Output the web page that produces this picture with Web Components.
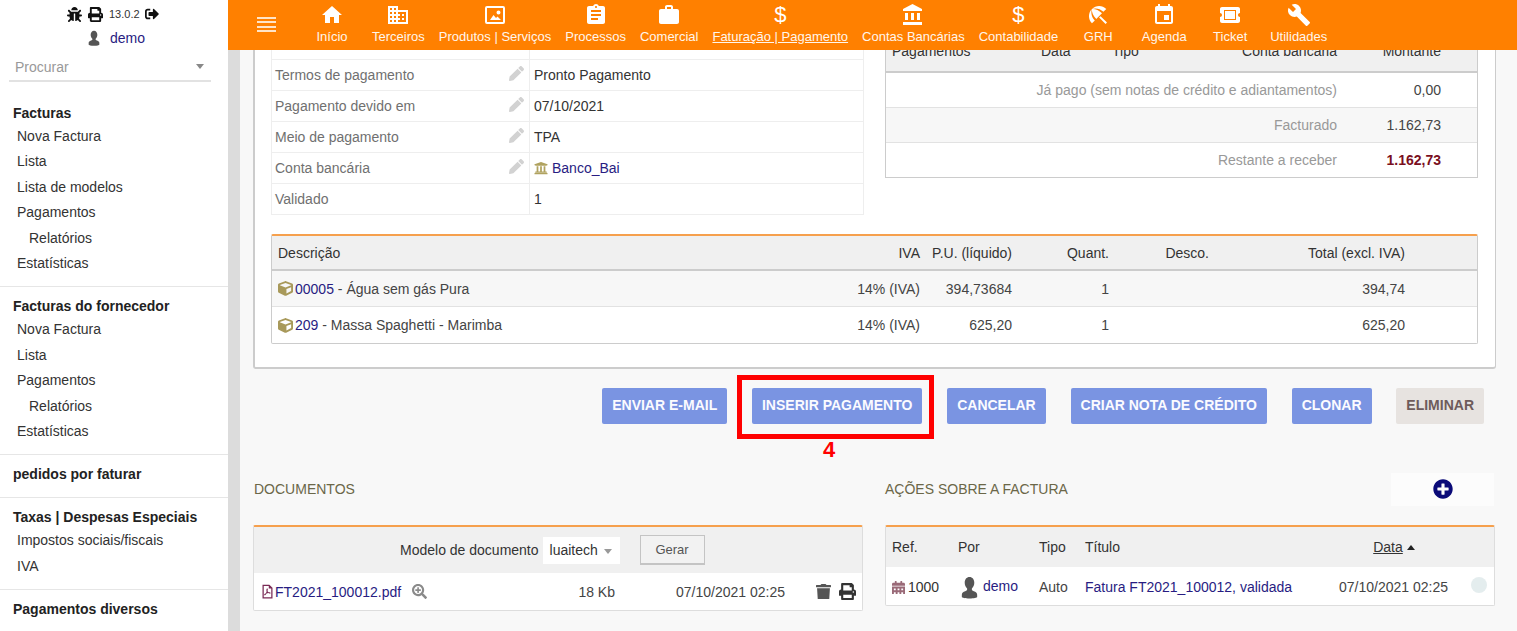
<!DOCTYPE html>
<html lang="pt">
<head>
<meta charset="utf-8">
<title>Factura</title>
<style>
  html, body {margin: 0;height: 100%;overflow: hidden;}
  body {display: flex;width: 1517px;height: 631px;background: #f8f8f8;color: #333;font: 14px/20px "Liberation Sans", Arial, sans-serif;}
</style>
</head>
<body>
<app-sidebar>
  <side-block heading="Facturas">
    <side-item>Nova Factura</side-item>
    <side-item>Lista</side-item>
    <side-item>Lista de modelos</side-item>
    <side-item>Pagamentos</side-item>
    <side-item sub>Relatórios</side-item>
    <side-item>Estatísticas</side-item>
  </side-block>
  <side-block heading="Facturas do fornecedor">
    <side-item>Nova Factura</side-item>
    <side-item>Lista</side-item>
    <side-item>Pagamentos</side-item>
    <side-item sub>Relatórios</side-item>
    <side-item>Estatísticas</side-item>
  </side-block>
  <side-block heading="pedidos por faturar" empty></side-block>
  <side-block heading="Taxas | Despesas Especiais">
    <side-item>Impostos sociais/fiscais</side-item>
    <side-item>IVA</side-item>
  </side-block>
  <side-block heading="Pagamentos diversos" empty></side-block>
</app-sidebar>

<app-main>
  <top-bar slot="bar">
    <nav-item icon="home" label="Início"></nav-item>
    <nav-item icon="company" label="Terceiros"></nav-item>
    <nav-item icon="picture" label="Produtos | Serviços"></nav-item>
    <nav-item icon="clipboard" label="Processos"></nav-item>
    <nav-item icon="briefcase" label="Comercial"></nav-item>
    <nav-item glyph="$" label="Faturação | Pagamento" active></nav-item>
    <nav-item icon="bank" label="Contas Bancárias"></nav-item>
    <nav-item glyph="$" label="Contabilidade"></nav-item>
    <nav-item icon="umbrella" label="GRH"></nav-item>
    <nav-item icon="event" label="Agenda"></nav-item>
    <nav-item icon="ticket" label="Ticket"></nav-item>
    <nav-item icon="wrench" label="Utilidades"></nav-item>
  </top-bar>

  <invoice-card>
    <field-table slot="left">
      <field-row></field-row>
      <field-row label="Termos de pagamento" editable>Pronto Pagamento</field-row>
      <field-row label="Pagamento devido em" editable>07/10/2021</field-row>
      <field-row label="Meio de pagamento" editable>TPA</field-row>
      <field-row label="Conta bancária" editable bank><span style="color:#281c82">Banco_Bai</span></field-row>
      <field-row label="Validado">1</field-row>
    </field-table>
    <pay-table slot="right">
      <pay-row label="Já pago (sem notas de crédito e adiantamentos)" amount="0,00"></pay-row>
      <pay-row label="Facturado" amount="1.162,73" shaded></pay-row>
      <pay-row label="Restante a receber" amount="1.162,73" due></pay-row>
    </pay-table>
    <line-table slot="lines">
      <line-row ref="00005" name=" - Água sem gás Pura" pu="394,73684" total="394,74" shaded></line-row>
      <line-row ref="209" name=" - Massa Spaghetti - Marimba" pu="625,20" total="625,20"></line-row>
    </line-table>
  </invoice-card>

  <action-bar>
    <act-button>Enviar e-mail</act-button>
    <call-out number="4"><act-button>Inserir pagamento</act-button></call-out>
    <act-button>Cancelar</act-button>
    <act-button>Criar nota de crédito</act-button>
    <act-button>Clonar</act-button>
    <act-button danger>Eliminar</act-button>
  </action-bar>

  <lower-panels>
    <doc-panel slot="docs"></doc-panel>
    <event-panel slot="events"></event-panel>
  </lower-panels>
</app-main>

<script>
// icons, [viewBox size, path]
const ICONS = {
  home: [24, 'M10 20v-6h4v6h5v-8h3L12 3 2 12h3v8z'],
  company: [24, 'M12 7V3H2v18h20V7H12zM6 19H4v-2h2v2zm0-4H4v-2h2v2zm0-4H4V9h2v2zm0-4H4V5h2v2zm4 12H8v-2h2v2zm0-4H8v-2h2v2zm0-4H8V9h2v2zm0-4H8V5h2v2zm10 12h-8v-2h2v-2h-2v-2h2v-2h-2V9h8v10zm-2-8h-2v2h2v-2zm0 4h-2v2h2v-2z'],
  picture: [24, 'M4 3h16a2 2 0 0 1 2 2v14a2 2 0 0 1-2 2H4a2 2 0 0 1-2-2V5a2 2 0 0 1 2-2zm0 2v14h16V5H4zm11.5 2.5a2 2 0 1 1 0 4 2 2 0 0 1 0-4zM7 17l3.5-5 2.5 3 1.5-1.500L18 17H7z'],
  clipboard: [24, 'M19 3h-4.18C14.4 1.84 13.3 1 12 1c-1.3 0-2.4.84-2.82 2H5c-1.1 0-2 .9-2 2v14c0 1.1.9 2 2 2h14c1.1 0 2-.9 2-2V5c0-1.1-.9-2-2-2zm-7 0c.55 0 1 .45 1 1s-.45 1-1 1-1-.45-1-1 .45-1 1-1zm2 14H7v-2h7v2zm3-4H7v-2h10v2zm0-4H7V7h10v2z'],
  briefcase: [24, 'M20 6h-4V4c0-1.11-.89-2-2-2h-4c-1.11 0-2 .89-2 2v2H4c-1.11 0-1.99.89-1.99 2L2 19c0 1.11.89 2 2 2h16c1.11 0 2-.89 2-2V8c0-1.11-.89-2-2-2zm-6 0h-4V4h4v2z'],
  bank: [24, 'M4 10v7h3v-7H4zm6 0v7h3v-7h-3zM2 22h19v-3H2v3zm14-12v7h3v-7h-3zm-4.500-9L2 6v2h19V6l-9.500-5z'],
  umbrella: [24, 'M13.127 14.56l1.43-1.43 6.44 6.443L19.57 21zm4.293-5.73l2.86-2.86c-3.95-3.95-10.35-3.96-14.3-.02 3.93-1.3 8.31-.25 11.44 2.88zM5.95 5.98c-3.94 3.95-3.93 10.35.02 14.3l2.86-2.86C5.7 14.29 4.65 9.91 5.95 5.98zm.02-.02l-.01.01c-.38 3.01 1.17 6.88 4.3 10.02l5.73-5.73c-3.13-3.13-7.01-4.68-10.02-4.3z'],
  event: [24, 'M17 12h-5v5h5v-5zM16 1v2H8V1H6v2H5c-1.11 0-1.99.9-1.99 2L3 19c0 1.100.89 2 2 2h14c1.100 0 2-.9 2-2V5c0-1.100-.9-2-2-2h-1V1h-2zm3 18H5V8h14v11z'],
  ticket: [24, 'M22 10V6c0-1.11-.9-2-2-2H4c-1.100 0-1.99.89-1.99 2v4c1.100 0 1.99.9 1.99 2s-.89 2-2 2v4c0 1.100.9 2 2 2h16c1.100 0 2-.9 2-2v-4c-1.100 0-2-.9-2-2s.9-2 2-2zM18 7v10H6V7h12zM17 8H7v8h10V8z'],
  wrench: [24, 'M22.7 19l-9.100-9.100c.9-2.300.4-5-1.500-6.900-2-2-5-2.400-7.400-1.300L9 6 6 9 1.600 4.700C.4 7.100.9 10.100 2.900 12.100c1.900 1.900 4.600 2.400 6.900 1.500l9.100 9.100c.4.4 1 .4 1.400 0l2.300-2.300c.5-.4.5-1.100.1-1.400z'],
  bug: [512, 'M511.988 288.9c-.478 17.43-15.217 31.1-32.653 31.1H424v16c0 21.864-4.882 42.584-13.6 61.145l60.228 60.228c12.496 12.497 12.496 32.758 0 45.255-12.498 12.497-32.759 12.496-45.256 0l-54.736-54.736C345.886 467.965 314.351 480 280 480V236c0-6.627-5.373-12-12-12h-24c-6.627 0-12 5.373-12 12v244c-34.351 0-65.886-12.035-90.636-32.108l-54.736 54.736c-12.498 12.497-32.759 12.496-45.256 0-12.496-12.497-12.496-32.758 0-45.255l60.228-60.228C92.882 378.584 88 357.864 88 336v-16H32.666C15.23 320 .491 306.33.013 288.9-.484 270.816 14.028 256 32 256h56v-58.745l-46.628-46.628c-12.496-12.497-12.496-32.758 0-45.255 12.498-12.497 32.758-12.497 45.256 0L141.255 160h229.489l54.627-54.627c12.498-12.497 32.758-12.497 45.256 0 12.496 12.497 12.496 32.758 0 45.255L424 197.255V256h56c17.972 0 32.484 14.816 31.988 32.900zM257 0c-61.856 0-112 50.144-112 112h224C369 50.144 318.856 0 257 0z'],
  print: [512, 'M448 192V77.25c0-8.49-3.37-16.62-9.37-22.63L393.37 9.37c-6-6-14.14-9.37-22.63-9.37H96C78.33 0 64 14.33 64 32v160c-35.35 0-64 28.65-64 64v112c0 8.84 7.16 16 16 16h48v96c0 17.67 14.33 32 32 32h320c17.67 0 32-14.33 32-32v-96h48c8.84 0 16-7.16 16-16V256c0-35.35-28.65-64-64-64zm-64 256H128v-96h256v96zm0-224H128V64h192v48c0 8.84 7.16 16 16 16h48v96zm48 72c-13.25 0-24-10.75-24-24 0-13.26 10.75-24 24-24s24 10.74 24 24c0 13.25-10.75 24-24 24z'],
  logout: [512, 'M497 273L329 441c-15 15-41 4.500-41-17v-96H152c-13.300 0-24-10.700-24-24v-96c0-13.300 10.700-24 24-24h136V88c0-21.400 25.900-32 41-17l168 168c9.300 9.400 9.300 24.600 0 34zM192 436v-40c0-6.600-5.400-12-12-12H96c-17.700 0-32-14.300-32-32V160c0-17.700 14.300-32 32-32h84c6.600 0 12-5.400 12-12V76c0-6.600-5.400-12-12-12H96c-53 0-96 43-96 96v192c0 53 43 96 96 96h84c6.600 0 12-5.400 12-12z'],
  user: [24, 'M12 1c3 0 5 2.500 5 6 0 2.500-1 4.500-2.500 6-.4 1.500.4 2.300 2 2.800 2 .7 3.500 1.600 3.500 3.700V22c0 .6-3.500 1.500-8 1.500S4 22.600 4 22v-2.500c0-2.100 1.500-3 3.500-3.700 1.600-.5 2.400-1.300 2-2.800C8 11.500 7 9.500 7 7c0-3.500 2-6 5-6z'],
  pencil: [512, 'M497.9 142.1l-46.1 46.1c-4.7 4.7-12.3 4.7-17 0l-111-111c-4.7-4.7-4.7-12.3 0-17l46.1-46.1c18.7-18.7 49.1-18.7 67.9 0l60.1 60.1c18.8 18.7 18.8 49.1 0 67.900zM284.2 99.800L21.600 362.400.4 483.900c-2.900 16.400 11.400 30.600 27.800 27.800l121.500-21.300 262.600-262.600c4.700-4.700 4.700-12.300 0-17l-111-111c-4.800-4.700-12.400-4.700-17.100 0z'],
  university: [512, 'M496 128v16a8 8 0 0 1-8 8h-24v12c0 6.627-5.373 12-12 12H60c-6.627 0-12-5.373-12-12v-12H24a8 8 0 0 1-8-8v-16a8 8 0 0 1 4.941-7.392l232-88a7.996 7.996 0 0 1 6.118 0l232 88A8 8 0 0 1 496 128zm-24 304H40c-13.255 0-24 10.745-24 24v16a8 8 0 0 0 8 8h464a8 8 0 0 0 8-8v-16c0-13.255-10.745-24-24-24zM96 192v192H60c-6.627 0-12 5.373-12 12v20h416v-20c0-6.627-5.373-12-12-12h-36V192h-64v192h-64V192h-64v192h-64V192H96z'],
  cube: [512, 'M239.1 6.300l-208 78c-18.700 7-31.100 25-31.100 45v225.100c0 18.200 10.300 34.800 26.500 42.900l208 104c13.500 6.800 29.400 6.800 42.900 0l208-104c16.300-8.100 26.500-24.800 26.500-42.900V129.300c0-20-12.400-37.900-31.100-44.900l-208-78C262 2.200 250 2.200 239.100 6.300zM256 68.400l192 72v1.100l-192 78-192-78v-1.100l192-72zm32 356V275.500l160-65v133.900l-160 80z'],
  trash: [448, 'M432 32H312l-9.400-18.700A24 24 0 0 0 281.100 0H166.800a23.720 23.720 0 0 0-21.400 13.300L136 32H16A16 16 0 0 0 0 48v32a16 16 0 0 0 16 16h416a16 16 0 0 0 16-16V48a16 16 0 0 0-16-16zM53.200 467a48 48 0 0 0 47.900 45h245.800a48 48 0 0 0 47.900-45L416 128H32z'],
  zoomin: [512, 'M304 192v32c0 6.600-5.400 12-12 12h-56v56c0 6.600-5.400 12-12 12h-32c-6.600 0-12-5.400-12-12v-56h-56c-6.600 0-12-5.400-12-12v-32c0-6.600 5.400-12 12-12h56v-56c0-6.600 5.400-12 12-12h32c6.600 0 12 5.400 12 12v56h56c6.600 0 12 5.400 12 12zm201 284.700L476.700 505c-9.400 9.400-24.600 9.400-33.900 0L343 405.300c-4.500-4.500-7-10.600-7-17V372c-35.300 27.600-79.700 44-128 44C93.100 416 0 322.900 0 208S93.100 0 208 0s208 93.100 208 208c0 48.300-16.400 92.700-44 128h16.300c6.400 0 12.500 2.500 17 7l99.700 99.700c9.300 9.400 9.300 24.600 0 34zM344 208c0-75.200-60.800-136-136-136S72 132.800 72 208s60.800 136 136 136 136-60.800 136-136z'],
  calendar: [448, 'M0 464c0 26.500 21.500 48 48 48h352c26.500 0 48-21.500 48-48V192H0v272zm320-196c0-6.600 5.400-12 12-12h40c6.600 0 12 5.400 12 12v40c0 6.600-5.400 12-12 12h-40c-6.600 0-12-5.400-12-12v-40zm0 128c0-6.600 5.400-12 12-12h40c6.600 0 12 5.400 12 12v40c0 6.600-5.400 12-12 12h-40c-6.600 0-12-5.400-12-12v-40zM192 268c0-6.600 5.400-12 12-12h40c6.600 0 12 5.400 12 12v40c0 6.600-5.400 12-12 12h-40c-6.600 0-12-5.400-12-12v-40zm0 128c0-6.600 5.400-12 12-12h40c6.600 0 12 5.400 12 12v40c0 6.600-5.400 12-12 12h-40c-6.600 0-12-5.400-12-12v-40zM64 268c0-6.600 5.400-12 12-12h40c6.600 0 12 5.400 12 12v40c0 6.600-5.400 12-12 12H76c-6.600 0-12-5.400-12-12v-40zm0 128c0-6.600 5.400-12 12-12h40c6.600 0 12 5.400 12 12v40c0 6.600-5.400 12-12 12H76c-6.600 0-12-5.400-12-12v-40zM400 64h-48V16c0-8.800-7.200-16-16-16h-32c-8.800 0-16 7.200-16 16v48H160V16c0-8.800-7.200-16-16-16h-32c-8.800 0-16 7.200-16 16v48H48C21.500 64 0 85.500 0 112v48h448v-48c0-26.500-21.500-48-48-48z'],
  pluscircle: [512, 'M256 8C119 8 8 119 8 256s111 248 248 248 248-111 248-248S393 8 256 8zm144 276c0 6.600-5.400 12-12 12h-92v92c0 6.600-5.400 12-12 12h-56c-6.600 0-12-5.400-12-12v-92h-92c-6.600 0-12-5.400-12-12v-56c0-6.600 5.400-12 12-12h92v-92c0-6.600 5.400-12 12-12h56c6.600 0 12 5.400 12 12v92h92c6.600 0 12 5.400 12 12v56z'],
  pdf: [24, 'M5 1h10l5 5v17H4V1h1zm1 2v18h12V7h-4V3H6zm5.500 4c1 0 1.200 1 .9 2.500-.1.600-.2 1-.4 1.500.4.800 1 1.600 1.700 2.200 1.300-.2 3.300-.2 3.300 1.100 0 1.200-1.800 1.100-3.600-.1-1 .2-2 .5-3 .9-.8 1.500-1.800 3-2.900 3-.8 0-1.100-.7-.8-1.300.4-.9 1.500-1.600 2.700-2.100.5-1 .9-2 1.200-3-.5-1.300-.6-4.700.9-4.700z']
};

function icon(name, size, color) {
  const [vb, d] = ICONS[name];
  return `<svg width="${size}" height="${size}" viewBox="0 0 ${vb} ${vb}" style="display:block;flex:none" fill="${color || 'currentColor'}" fill-rule="evenodd" aria-hidden="true"><path d="${d}"/></svg>`;
}

class AppSidebar extends HTMLElement {
  constructor() {
    super();
    this.attachShadow({ mode: 'open' }).innerHTML = `
      <style>
      :host {display: block;flex: none;width: 228px;height: 631px;overflow: hidden;background: #fff;}
      .tools {display: flex;align-items: center;height: 28px;padding-left: 67px;box-sizing: border-box;}
      .tools span {font-size: 11px;margin: 0 5px 0 6px;}
      .who {display: flex;align-items: center;height: 20px;padding-left: 86px;color: #281c82;}
      .who span {margin-left: 8px;}
      .search {display: flex;align-items: center;justify-content: space-between;margin: 5px 17px 12px 9px;padding: 0 7px 0 6px;height: 27px;border-bottom: 2px solid #e2e2e2;color: #999;}
      .search i {border: 4.500px solid transparent;border-top: 5px solid #888;border-bottom: 0;}
      </style>
      <div class="tools">${icon('bug', 15, '#111')}<div style="width:6px"></div>${icon('print', 15, '#111')}<span>13.0.2</span>${icon('logout', 14, '#111')}</div>
      <div class="who">${icon('user', 16, '#555')}<span>demo</span></div>
      <div class="search">Procurar<i></i></div>
      <slot></slot>
    `;
  }
}
customElements.define('app-sidebar', AppSidebar);

class SideBlock extends HTMLElement {
  constructor() {
    super();
    this.attachShadow({ mode: 'open' }).innerHTML = `
      <style>
      :host {display: block;padding: 9px 0 10px;border-bottom: 1px solid #e6e6e6;}
      :host([empty]) {padding-bottom: 12px;}
      :host(:last-of-type) {border: 0;}
      h4 {margin: 0;padding-left: 13px;font: bold 14px/21px "Liberation Sans", Arial, sans-serif;color: #222;}
      </style>
      <h4>${this.getAttribute('heading')}</h4>
      <slot></slot>
    `;
  }
}
customElements.define('side-block', SideBlock);

class SideItem extends HTMLElement {
  constructor() {
    super();
    this.attachShadow({ mode: 'open' }).innerHTML = `
      <style>
      :host {display: block;padding-left: 17px;line-height: 25.400px;color: #333;}
      :host([sub]) {padding-left: 29px;}
      </style>
      <slot></slot>
    `;
  }
}
customElements.define('side-item', SideItem);

class AppMain extends HTMLElement {
  constructor() {
    super();
    this.attachShadow({ mode: 'open' }).innerHTML = `
      <style>
      :host {display: flex;flex-direction: column;flex: 1;min-width: 0;height: 631px;}
      .body {flex: 1;display: flex;min-height: 0;}
      .track {flex: none;width: 12px;background: #dcdcdc;}
      .page {flex: 1;min-width: 0;overflow: hidden;padding: 0 21px 0 13px;}
      </style>
      <slot name="bar"></slot>
      <div class="body">
        <div class="track"></div>
        <div class="page"><slot></slot></div>
      </div>
    `;
  }
}
customElements.define('app-main', AppMain);

class TopBar extends HTMLElement {
  constructor() {
    super();
    this.attachShadow({ mode: 'open' }).innerHTML = `
      <style>
      :host {display: flex;flex: none;height: 50px;background: #ff8000;color: #fff;padding-left: 29px;position: relative;z-index: 2;}
      .burger {flex: none;display: flex;flex-direction: column;justify-content: space-between;width: 19px;height: 15px;margin: 17px 23px 0 0;}
      .burger i {display: block;height: 2px;background: #ffe4c8;}
      </style>
      <div class="burger"><i></i><i></i><i></i><i></i></div>
      <slot></slot>
    `;
  }
}
customElements.define('top-bar', TopBar);

class NavItem extends HTMLElement {
  constructor() {
    super();
    const name = this.getAttribute('icon');
    const glyph = this.getAttribute('glyph');
    const ico = name ? icon(name, 24) : `<b>${glyph}</b>`;
    this.attachShadow({ mode: 'open' }).innerHTML = `
      <style>
      :host {display: flex;flex-direction: column;align-items: center;box-sizing: border-box;min-width: 66px;padding: 0 7px;color: #fff;}
      .ico {height: 27px;padding-top: 2px;box-sizing: border-box;display: flex;align-items: center;justify-content: center;}
      b {font: normal 22px/25px "Liberation Sans", Arial, sans-serif;}
      .txt {font-size: 13px;line-height: 16px;margin-top: 2px;white-space: nowrap;color: #fff6ec;}
      :host([active]) .txt {text-decoration: underline;}
      </style>
      <div class="ico">${ico}</div>
      <div class="txt">${this.getAttribute('label')}</div>
    `;
  }
}
customElements.define('nav-item', NavItem);

class InvoiceCard extends HTMLElement {
  constructor() {
    super();
    this.attachShadow({ mode: 'open' }).innerHTML = `
      <style>
      :host {display: block;margin-top: -21px;padding: 0 17px 23px 16px;background: #fff;border: solid #ccc;border-width: 0 1px 2px 2px;border-radius: 0 0 3px 3px;}
      .cols {display: grid;grid-template-columns: 593px 593px;column-gap: 21px;}
      .lines {margin-top: 19px;}
      </style>
      <div class="cols"><slot name="left"></slot><slot name="right"></slot></div>
      <div class="lines"><slot name="lines"></slot></div>
    `;
  }
}
customElements.define('invoice-card', InvoiceCard);

class FieldTable extends HTMLElement {
  constructor() {
    super();
    this.attachShadow({ mode: 'open' }).innerHTML = `
      <style>:host {display: block;border: 1px solid #eee;border-width: 0 1px 0 1px;}</style>
      <slot></slot>
    `;
  }
}
customElements.define('field-table', FieldTable);

class FieldRow extends HTMLElement {
  constructor() {
    super();
    const pen = this.hasAttribute('editable') ? icon('pencil', 15, '#d2d2d2') : '';
    const bank = this.hasAttribute('bank') ? `<span class="bk">${icon('university', 14, '#b0a25f')}</span>` : '';
    this.attachShadow({ mode: 'open' }).innerHTML = `
      <style>
      :host {display: grid;grid-template-columns: 258px 1fr;height: 31px;box-sizing: border-box;border-bottom: 1px solid #eee;background: #fff;}
      .k {display: flex;align-items: center;justify-content: space-between;padding: 0 5px 0 3px;border-right: 1px solid #eee;color: #707070;}
      .k svg {margin-top: -4px;}
      .v {display: flex;align-items: center;padding-left: 4px;color: #333;}
      .bk {margin-right: 4px;}
      </style>
      <div class="k"><span>${this.getAttribute('label') || ''}</span>${pen}</div>
      <div class="v">${bank}<slot></slot></div>
    `;
  }
}
customElements.define('field-row', FieldRow);

const PAY_COLS = '149px 71px 100px 125px 104px 1fr';

class PayTable extends HTMLElement {
  constructor() {
    super();
    this.attachShadow({ mode: 'open' }).innerHTML = `
      <style>
      :host {display: block;margin-top: 6px;align-self: start;background: #fff;border: 1px solid #ccc;border-top: 0;}
      .head {display: grid;grid-template-columns: ${PAY_COLS};align-items: center;height: 38px;box-sizing: border-box;padding: 0 0 4px 6px;background: #f0f0f0;border-bottom: 2px solid #ccc;}
      .r {text-align: right;}
      </style>
      <div class="head"><span>Pagamentos</span><span>Data</span><span>Tipo</span><span class="r">Conta bancária</span><span class="r">Montante</span></div>
      <slot></slot>
    `;
  }
}
customElements.define('pay-table', PayTable);

class PayRow extends HTMLElement {
  constructor() {
    super();
    this.attachShadow({ mode: 'open' }).innerHTML = `
      <style>
      :host {display: grid;grid-template-columns: ${PAY_COLS};align-items: center;height: 35px;box-sizing: border-box;padding-left: 6px;border-bottom: 1px solid #e2e2e2;}
      :host(:last-child) {border-bottom: 0;height: 34px;}
      :host([shaded]) {background: #f7f7f7;}
      .l {grid-column: 1 / 5;text-align: right;color: #999;}
      .a {text-align: right;color: #444;}
      :host([due]) .a {color: #7a0f1e;font-weight: bold;}
      </style>
      <span class="l">${this.getAttribute('label')}</span>
      <span class="a">${this.getAttribute('amount')}</span>
    `;
  }
}
customElements.define('pay-row', PayRow);

const LINE_COLS = '1fr 80px 92px 97px 100px 196px 72px';

class LineTable extends HTMLElement {
  constructor() {
    super();
    this.attachShadow({ mode: 'open' }).innerHTML = `
      <style>
      :host {display: block;background: #fff;border: 1px solid #ccc;border-top: 2px solid #f6a04d;border-radius: 2px;}
      .head {display: grid;grid-template-columns: ${LINE_COLS};align-items: center;height: 35px;box-sizing: border-box;padding-left: 6px;background: #f0f0f0;border-bottom: 2px solid #ccc;}
      .r {text-align: right;}
      </style>
      <div class="head"><span>Descrição</span><span class="r">IVA</span><span class="r">P.U. (líquido)</span><span class="r">Quant.</span><span class="r">Desco.</span><span class="r">Total (excl. IVA)</span></div>
      <slot></slot>
    `;
  }
}
customElements.define('line-table', LineTable);

class LineRow extends HTMLElement {
  constructor() {
    super();
    this.attachShadow({ mode: 'open' }).innerHTML = `
      <style>
      :host {display: grid;grid-template-columns: ${LINE_COLS};align-items: center;height: 36px;box-sizing: border-box;padding-left: 6px;border-bottom: 1px solid #e2e2e2;color: #444;}
      :host(:last-child) {border-bottom: 0;}
      :host([shaded]) {background: #f7f7f7;}
      .d {display: flex;align-items: center;white-space: pre;}
      .d a {color: #281c82;}
      .d svg {margin-right: 2px;}
      .r {text-align: right;}
      </style>
      <span class="d">${icon('cube', 15, '#a8995a')}<a>${this.getAttribute('ref')}</a>${this.getAttribute('name')}</span>
      <span class="r">14% (IVA)</span>
      <span class="r">${this.getAttribute('pu')}</span>
      <span class="r">1</span>
      <span></span>
      <span class="r">${this.getAttribute('total')}</span>
    `;
  }
}
customElements.define('line-row', LineRow);

class ActionBar extends HTMLElement {
  constructor() {
    super();
    this.attachShadow({ mode: 'open' }).innerHTML = `
      <style>:host {display: flex;justify-content: flex-end;gap: 24.800px;margin: 19px 12px 0 0;}</style>
      <slot></slot>
    `;
  }
}
customElements.define('action-bar', ActionBar);

class ActButton extends HTMLElement {
  constructor() {
    super();
    this.attachShadow({ mode: 'open' }).innerHTML = `
      <style>
      :host {display: flex;align-items: center;height: 36px;box-sizing: border-box;padding: 0 10px 2px;border-radius: 2px;background: #7a94e2;color: #fbfbff;font-weight: bold;text-transform: uppercase;white-space: nowrap;}
      :host([danger]) {background: #e7e3e0;color: #6e5b5b;}
      </style>
      <slot></slot>
    `;
  }
}
customElements.define('act-button', ActButton);

// red annotation drawn over the button
class CallOut extends HTMLElement {
  constructor() {
    super();
    this.attachShadow({ mode: 'open' }).innerHTML = `
      <style>
      :host {display: block;position: relative;}
      .box {position: absolute;left: -15px;right: -12px;top: -13px;bottom: -15px;border: 5px solid #f00;}
      .num {position: absolute;left: 50%;top: 50px;width: 20px;margin-left: -18px;text-align: center;font: bold 22px/24px "Liberation Sans", Arial, sans-serif;color: #f00;}
      </style>
      <slot></slot>
      <div class="box"></div>
      <div class="num">${this.getAttribute('number')}</div>
    `;
  }
}
customElements.define('call-out', CallOut);

class LowerPanels extends HTMLElement {
  constructor() {
    super();
    this.attachShadow({ mode: 'open' }).innerHTML = `
      <style>
      :host {display: grid;grid-template-columns: 610px 610px;column-gap: 22px;margin-top: 48px;}
      </style>
      <slot name="docs"></slot>
      <slot name="events"></slot>
    `;
  }
}
customElements.define('lower-panels', LowerPanels);

const TITLE_CSS = `
  .title {display: flex;align-items: center;justify-content: space-between;height: 33px;margin-bottom: 20px;color: #6b6748;}
  .box {background: #fff;border: 1px solid #ddd;border-top: 2px solid #f6a04d;border-radius: 2px;}
  a {color: #281c82;}
`;

class DocPanel extends HTMLElement {
  constructor() {
    super();
    this.attachShadow({ mode: 'open' }).innerHTML = `
      <style>
      ${TITLE_CSS}
      :host {display: block;}
      .title {padding-left: 1px;}
      .head {display: flex;align-items: center;height: 46px;background: #f0f0f0;padding-left: 146px;}
      .sel {display: flex;align-items: center;width: 77px;height: 27px;box-sizing: border-box;margin-left: 4px;padding-left: 7px;background: #fff;color: #333;}
      .sel i {border: 4.500px solid transparent;border-top: 5px solid #999;border-bottom: 0;margin: 2px 0 0 6px;}
      .gen {display: flex;align-items: center;justify-content: center;width: 65px;height: 30px;box-sizing: border-box;margin-left: 20px;background: #f2f2f2;border: 1px solid #c4c4c4;border-bottom-width: 2px;font-size: 13px;color: #555;}
      .row {display: grid;grid-template-columns: 1fr 100px 170px 77px;align-items: center;height: 37px;box-sizing: border-box;padding: 0 0 0 4px;color: #444;}
      .f {display: flex;align-items: center;padding-left: 2px;}
      .f a {margin: 0 11px 0 0;}
      .sz {text-align: right;}
      .dt {text-align: right;}
      .ops {display: flex;justify-content: flex-end;align-items: center;gap: 8px;padding-right: 6px;}
      </style>
      <div class="title">DOCUMENTOS</div>
      <div class="box">
        <div class="head">Modelo de documento<span class="sel">luaitech<i></i></span><span class="gen">Gerar</span></div>
        <div class="row">
          <span class="f">${icon('pdf', 15, '#7a2a55')}<a>FT2021_100012.pdf</a>${icon('zoomin', 15, '#8a8a8a')}</span>
          <span class="sz">18 Kb</span>
          <span class="dt">07/10/2021 02:25</span>
          <span class="ops">${icon('trash', 15, '#555')}${icon('print', 17, '#333')}</span>
        </div>
      </div>
    `;
  }
}
customElements.define('doc-panel', DocPanel);

class EventPanel extends HTMLElement {
  constructor() {
    super();
    const cols = '66px 81px 46px 254px 110px 1fr';
    this.attachShadow({ mode: 'open' }).innerHTML = `
      <style>
      ${TITLE_CSS}
      :host {display: block;}
      .add {display: flex;align-items: center;justify-content: center;width: 103px;height: 33px;background: #fcfcfc;margin: 1px 1px 0 0;color: #0a0a78;}
      .head, .row {display: grid;grid-template-columns: ${cols};align-items: center;padding-left: 6px;box-sizing: border-box;}
      .head {height: 40px;background: #f0f0f0;}
      .row {height: 38px;padding-top: 2px;color: #444;}
      .c {display: flex;align-items: center;}
      .u {justify-content: center;}
      .u span {text-decoration: underline;}
      .u i {border: 4.500px solid transparent;border-bottom: 5px solid #222;border-top: 0;margin-left: 4px;}
      .dot {width: 16px;height: 16px;border-radius: 50%;background: #e4edee;margin-left: 22px;margin-top: -4px;}
      </style>
      <div class="title">AÇÕES SOBRE A FACTURA<span class="add">${icon('pluscircle', 20)}</span></div>
      <div class="box">
        <div class="head"><span>Ref.</span><span>Por</span><span>Tipo</span><span>Título</span><span class="c u"><span>Data</span><i></i></span><span></span></div>
        <div class="row">
          <span class="c">${icon('calendar', 13, '#9a6a78')}<a style="margin-left:3px;color:#333">1000</a></span>
          <span class="c">${icon('user', 23, '#555')}<a style="margin:-3px 0 0 2px">demo</a></span>
          <span>Auto</span>
          <a>Fatura FT2021_100012, validada</a>
          <span style="white-space:nowrap">07/10/2021 02:25</span>
          <div class="dot"></div>
        </div>
      </div>
    `;
  }
}
customElements.define('event-panel', EventPanel);
</script>
</body>
</html>
